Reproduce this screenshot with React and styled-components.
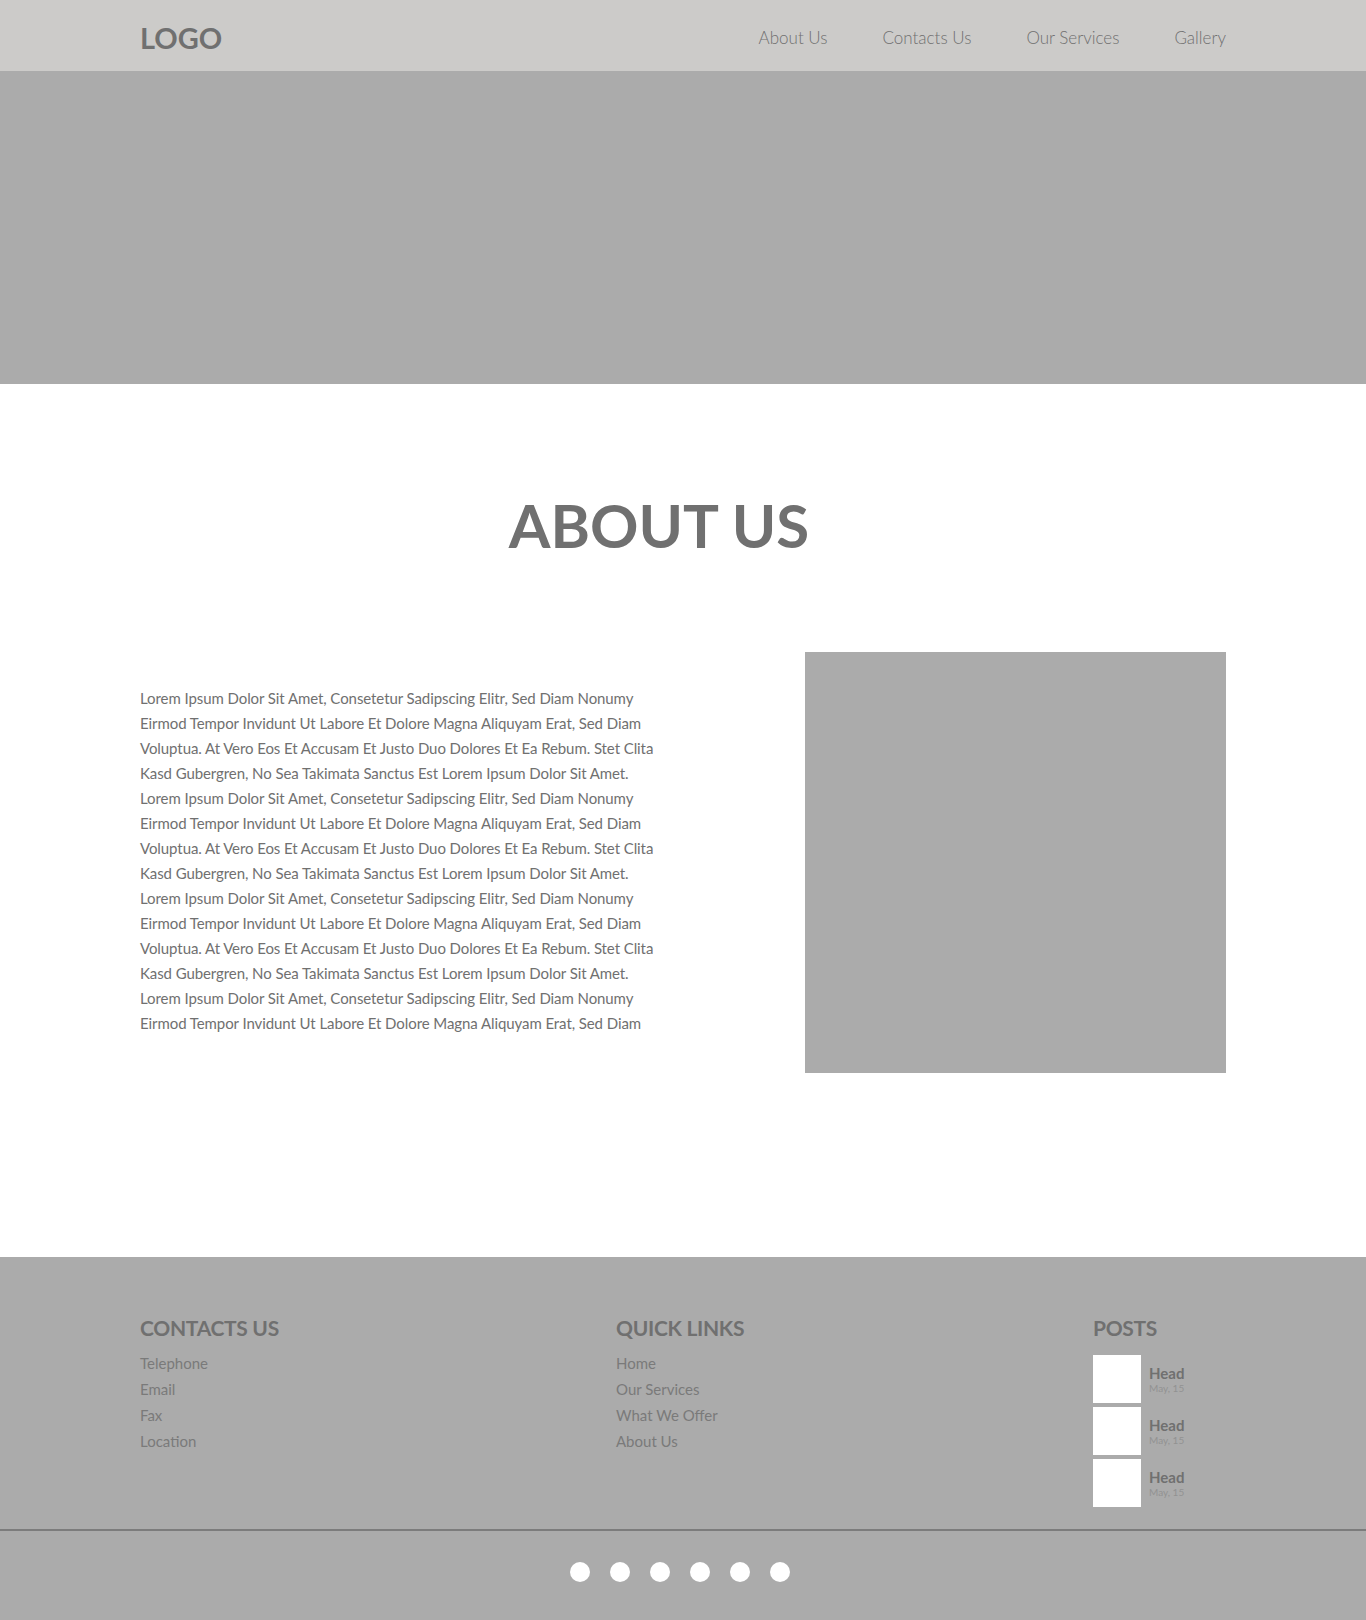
import React from "react";
import styled, { createGlobalStyle } from "styled-components";

const navItems = ["About Us", "Contacts Us", "Our Services", "Gallery"];

const loremLines = [
  "Lorem Ipsum Dolor Sit Amet, Consetetur Sadipscing Elitr, Sed Diam Nonumy",
  "Eirmod Tempor Invidunt Ut Labore Et Dolore Magna Aliquyam Erat, Sed Diam",
  "Voluptua. At Vero Eos Et Accusam Et Justo Duo Dolores Et Ea Rebum. Stet Clita",
  "Kasd Gubergren, No Sea Takimata Sanctus Est Lorem Ipsum Dolor Sit Amet.",
];

// 14 lines, same as the mockup
const aboutText = [...loremLines, ...loremLines, ...loremLines, loremLines[0], loremLines[1]];

const contacts = ["Telephone", "Email", "Fax", "Location"];
const quickLinks = ["Home", "Our Services", "What We Offer", "About Us"];
const posts = [1, 2, 3];
const socials = [1, 2, 3, 4, 5, 6];

function App() {
  return (
    <>
      <GlobalStyle />
      <StHeader>
        <StContainer>
          <StHeaderRow>
            <StLogo>LOGO</StLogo>
            <StNav>
              {navItems.map((item) => (
                <StNavLink key={item}>{item}</StNavLink>
              ))}
            </StNav>
          </StHeaderRow>
        </StContainer>
      </StHeader>

      <StHero />

      <StAbout>
        <StContainer>
          <StTitle>ABOUT US</StTitle>
          <StAboutRow>
            <StText>
              {aboutText.map((line, i) => (
                <span key={i}>{line}</span>
              ))}
            </StText>
            <StImageBox />
          </StAboutRow>
        </StContainer>
      </StAbout>

      <StFooter>
        <StContainer>
          <StFooterGrid>
            <div>
              <StFooterTitle>CONTACTS US</StFooterTitle>
              <StLinkList>
                {contacts.map((c) => (
                  <li key={c}>{c}</li>
                ))}
              </StLinkList>
            </div>
            <div>
              <StFooterTitle>QUICK LINKS</StFooterTitle>
              <StLinkList>
                {quickLinks.map((l) => (
                  <li key={l}>{l}</li>
                ))}
              </StLinkList>
            </div>
            <div>
              <StFooterTitle>POSTS</StFooterTitle>
              <StPostList>
                {posts.map((p) => (
                  <StPost key={p}>
                    <StThumb />
                    <StPostText>
                      <StPostHead>Head</StPostHead>
                      <StPostDate>May, 15</StPostDate>
                    </StPostText>
                  </StPost>
                ))}
              </StPostList>
            </div>
          </StFooterGrid>
        </StContainer>
        <StBottomBar>
          {socials.map((s) => (
            <StDot key={s} />
          ))}
        </StBottomBar>
      </StFooter>
    </>
  );
}

export default App;

const GlobalStyle = createGlobalStyle`
  body {
    margin: 0;
    font-family: Lato, "Open Sans", sans-serif;
    color: #707070;
  }
`;

const StContainer = styled.div`
  width: 1086px;
  margin: 0 auto;
`;

const StHeader = styled.header`
  height: 71px;
  background: #cccbc9;
`;

const StHeaderRow = styled.div`
  height: 71px;
  display: flex;
  align-items: center;
  justify-content: space-between;
  padding-top: 3px;
  box-sizing: border-box;
`;

const StLogo = styled.div`
  font-size: 29px;
  font-weight: 700;
  color: #707070;
`;

const StNav = styled.nav`
  display: flex;
  gap: 55px;
`;

const StNavLink = styled.a`
  font-size: 17px;
  font-weight: 300;
  color: #707070;
  cursor: pointer;
`;

const StHero = styled.div`
  height: 313px;
  background: #ababab;
`;

const StAbout = styled.section`
  padding: 105px 0 184px;
  background: #fff;
`;

const StTitle = styled.h1`
  margin: 0;
  padding-right: 48px;
  text-align: center;
  font-size: 60px;
  line-height: 72px;
  font-weight: 700;
  color: #707070;
`;

const StAboutRow = styled.div`
  margin-top: 91px;
  display: flex;
  align-items: center;
  justify-content: space-between;
`;

const StText = styled.p`
  margin: 0 0 4px;
  display: flex;
  flex-direction: column;
  font-size: 15px;
  line-height: 25px;
  letter-spacing: -0.08px;
  color: #707070;
  white-space: nowrap;
`;

const StImageBox = styled.div`
  width: 421px;
  height: 421px;
  background: #ababab;
`;

const StFooter = styled.footer`
  background: #ababab;
`;

const StFooterGrid = styled.div`
  display: grid;
  grid-template-columns: 476px 477px 1fr;
  padding: 58px 0 22px;
`;

const StFooterTitle = styled.h3`
  margin: 0 0 9px;
  font-size: 21px;
  line-height: 26px;
  letter-spacing: -0.3px;
  font-weight: 700;
  color: #707070;
`;

const StLinkList = styled.ul`
  list-style: none;
  margin: 0;
  padding: 0;
  font-size: 15px;
  line-height: 26px;
  color: #7a7a7a;
`;

const StPostList = styled.div`
  padding-top: 5px;
  display: flex;
  flex-direction: column;
  gap: 4px;
`;

const StPost = styled.div`
  display: flex;
  gap: 8px;
`;

const StThumb = styled.div`
  width: 48px;
  height: 48px;
  background: #fff;
`;

const StPostText = styled.div`
  padding-top: 9px;
  display: flex;
  flex-direction: column;
`;

const StPostHead = styled.span`
  font-size: 15px;
  line-height: 18px;
  font-weight: 700;
  color: #707070;
`;

const StPostDate = styled.span`
  font-size: 10px;
  line-height: 12px;
  color: #929292;
`;

const StBottomBar = styled.div`
  border-top: 2px solid #7c7c7c;
  display: flex;
  justify-content: center;
  gap: 20px;
  padding: 31px 7px 38px 0;
`;

const StDot = styled.span`
  width: 20px;
  height: 20px;
  border-radius: 50%;
  background: #fff;
`;
